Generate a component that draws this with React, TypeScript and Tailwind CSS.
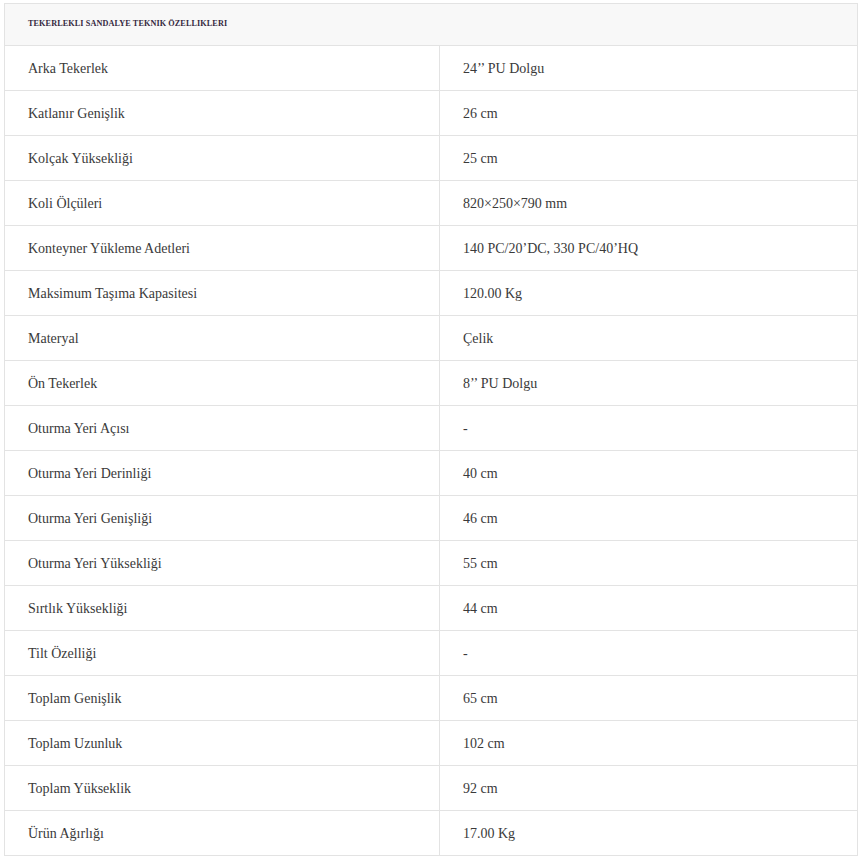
const specs: [string, string][] = [
  ["Arka Tekerlek", "24’’ PU Dolgu"],
  ["Katlanır Genişlik", "26 cm"],
  ["Kolçak Yüksekliği", "25 cm"],
  ["Koli Ölçüleri", "820×250×790 mm"],
  ["Konteyner Yükleme Adetleri", "140 PC/20’DC, 330 PC/40’HQ"],
  ["Maksimum Taşıma Kapasitesi", "120.00 Kg"],
  ["Materyal", "Çelik"],
  ["Ön Tekerlek", "8’’ PU Dolgu"],
  ["Oturma Yeri Açısı", "-"],
  ["Oturma Yeri Derinliği", "40 cm"],
  ["Oturma Yeri Genişliği", "46 cm"],
  ["Oturma Yeri Yüksekliği", "55 cm"],
  ["Sırtlık Yüksekliği", "44 cm"],
  ["Tilt Özelliği", "-"],
  ["Toplam Genişlik", "65 cm"],
  ["Toplam Uzunluk", "102 cm"],
  ["Toplam Yükseklik", "92 cm"],
  ["Ürün Ağırlığı", "17.00 Kg"],
]

export default function App() {
  return (
    <div className="bg-white pt-[3px] pl-[4px] pr-px font-['Liberation_Serif',serif] text-[#3a3a3a]">
      <div className="border border-[#e3e3e3]">
        <div className="h-[42px] flex items-center px-[23px] bg-[#f8f8f8] border-b border-[#e3e3e3]">
          <h2 className="text-[8.2px] font-bold uppercase tracking-[0.1px] text-[#35283f]">
            Tekerlekli Sandalye Teknik Özellikleri
          </h2>
        </div>
        {specs.map(([label, value], i) => (
          <div
            key={label}
            className={`grid grid-cols-[435px_1fr] text-[14px] ${i < specs.length - 1 ? "border-b border-[#e3e3e3]" : ""}`}
          >
            <div className="h-[44px] flex items-center pl-[23px] border-r border-[#e3e3e3]">{label}</div>
            <div className="h-[44px] flex items-center pl-[23px]">{value}</div>
          </div>
        ))}
      </div>
    </div>
  )
}
